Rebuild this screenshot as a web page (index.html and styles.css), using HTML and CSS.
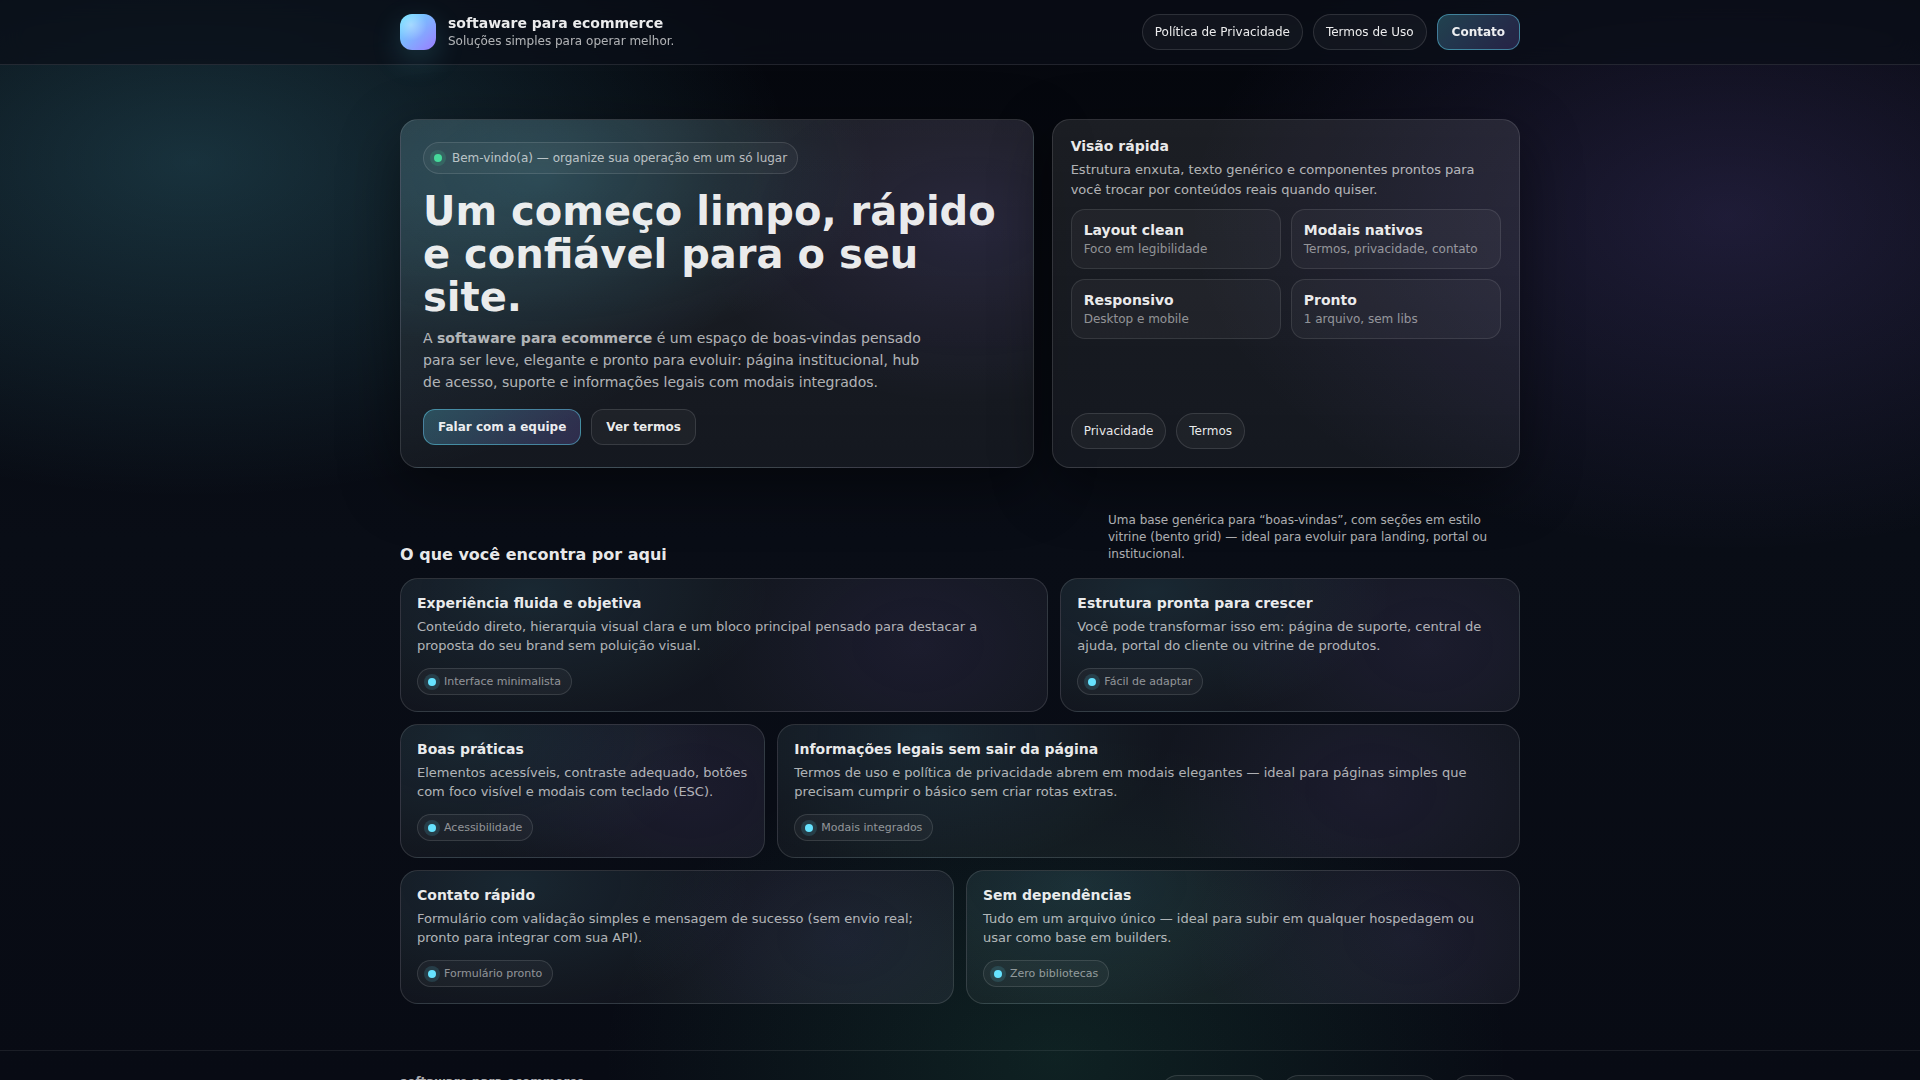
FILE: index.html
```html
<!DOCTYPE html>
<html lang="pt-BR">
<head>
    <meta charset="UTF-8">
    <meta name="viewport" content="width=device-width, initial-scale=1.0">
    <title>softaware para ecommerce</title>
    <link rel="stylesheet" href="styles.css">
</head>
<body>
    <header class="topbar">
        <div class="container topbar-inner">
            <a class="brand" href="#">
                <span class="logo"></span>
                <span class="brand-text">
                    <strong>softaware para ecommerce</strong>
                    <span>Soluções simples para operar melhor.</span>
                </span>
            </a>
            <nav class="actions">
                <button type="button" class="pill">Política de Privacidade</button>
                <button type="button" class="pill">Termos de Uso</button>
                <button type="button" class="btn btn-primary">Contato</button>
            </nav>
        </div>
    </header>

    <main class="container">
        <section class="hero">
            <div class="panel hero-main">
                <div class="badge"><span class="dot dot-green"></span>Bem-vindo(a) — organize sua operação em um só lugar</div>
                <h1>Um começo limpo, rápido e confiável para o seu site.</h1>
                <p>A <strong>softaware para ecommerce</strong> é um espaço de boas-vindas pensado para ser leve, elegante e pronto para evoluir: página institucional, hub de acesso, suporte e informações legais com modais integrados.</p>
                <div class="actions">
                    <button type="button" class="btn btn-primary">Falar com a equipe</button>
                    <button type="button" class="btn">Ver termos</button>
                </div>
            </div>

            <aside class="panel hero-side">
                <div>
                    <h3>Visão rápida</h3>
                    <p>Estrutura enxuta, texto genérico e componentes prontos para você trocar por conteúdos reais quando quiser.</p>
                    <div class="tiles">
                        <div class="tile"><strong>Layout clean</strong><span>Foco em legibilidade</span></div>
                        <div class="tile"><strong>Modais nativos</strong><span>Termos, privacidade, contato</span></div>
                        <div class="tile"><strong>Responsivo</strong><span>Desktop e mobile</span></div>
                        <div class="tile"><strong>Pronto</strong><span>1 arquivo, sem libs</span></div>
                    </div>
                </div>
                <div class="actions">
                    <button type="button" class="pill">Privacidade</button>
                    <button type="button" class="pill">Termos</button>
                </div>
            </aside>
        </section>

        <section class="features">
            <div class="section-head">
                <h2>O que você encontra por aqui</h2>
                <p>Uma base genérica para “boas-vindas”, com seções em estilo vitrine (bento grid) — ideal para evoluir para landing, portal ou institucional.</p>
            </div>

            <div class="bento">
                <article class="card span-7">
                    <h3>Experiência fluida e objetiva</h3>
                    <p>Conteúdo direto, hierarquia visual clara e um bloco principal pensado para destacar a proposta do seu brand sem poluição visual.</p>
                    <span class="chip"><span class="dot"></span>Interface minimalista</span>
                </article>
                <article class="card span-5">
                    <h3>Estrutura pronta para crescer</h3>
                    <p>Você pode transformar isso em: página de suporte, central de ajuda, portal do cliente ou vitrine de produtos.</p>
                    <span class="chip"><span class="dot"></span>Fácil de adaptar</span>
                </article>
                <article class="card span-4">
                    <h3>Boas práticas</h3>
                    <p>Elementos acessíveis, contraste adequado, botões com foco visível e modais com teclado (ESC).</p>
                    <span class="chip"><span class="dot"></span>Acessibilidade</span>
                </article>
                <article class="card span-8">
                    <h3>Informações legais sem sair da página</h3>
                    <p>Termos de uso e política de privacidade abrem em modais elegantes — ideal para páginas simples que precisam cumprir o básico sem criar rotas extras.</p>
                    <span class="chip"><span class="dot"></span>Modais integrados</span>
                </article>
                <article class="card span-6">
                    <h3>Contato rápido</h3>
                    <p>Formulário com validação simples e mensagem de sucesso (sem envio real; pronto para integrar com sua API).</p>
                    <span class="chip"><span class="dot"></span>Formulário pronto</span>
                </article>
                <article class="card span-6">
                    <h3>Sem dependências</h3>
                    <p>Tudo em um arquivo único — ideal para subir em qualquer hospedagem ou usar como base em builders.</p>
                    <span class="chip"><span class="dot"></span>Zero bibliotecas</span>
                </article>
            </div>
        </section>
    </main>

    <footer class="footer">
        <div class="container footer-inner">
            <strong>softaware para ecommerce</strong>
            <nav class="footer-links">
                <button type="button" class="pill">Termos de Uso</button>
                <button type="button" class="pill">Política de Privacidade</button>
                <button type="button" class="pill">Contato</button>
            </nav>
        </div>
    </footer>
</body>
</html>
```
FILE: styles.css
```css
:root {
    --text: rgba(255, 255, 255, 0.92);
    --muted: rgba(255, 255, 255, 0.68);
    --dim: rgba(255, 255, 255, 0.52);
    --line: rgba(255, 255, 255, 0.12);
    --cyan: #66e3ff;
    --green: #46d99a;
}

* {
    box-sizing: border-box;
}

body {
    margin: 0;
    font-family: "DejaVu Sans", sans-serif;
    font-size: 14px;
    color: var(--text);
    background:
        radial-gradient(1000px 560px at 10% 15%, rgba(102, 227, 255, 0.19), transparent 60%),
        radial-gradient(900px 560px at 90% 20%, rgba(155, 124, 255, 0.16), transparent 60%),
        radial-gradient(760px 540px at 55% 98%, rgba(70, 217, 154, 0.11), transparent 60%),
        linear-gradient(180deg, #05070d, #090d16 50%, #080b14);
    background-attachment: fixed;
}

h1, h2, h3, p {
    margin: 0;
}

.container {
    max-width: 1160px;
    margin: 0 auto;
    padding: 0 20px;
}

/* Top bar */
.topbar {
    position: sticky;
    top: 0;
    z-index: 10;
    background: rgba(10, 14, 24, 0.72);
    border-bottom: 1px solid rgba(255, 255, 255, 0.10);
    backdrop-filter: blur(12px);
}

.topbar-inner {
    display: flex;
    align-items: center;
    justify-content: space-between;
    padding-top: 14px;
    padding-bottom: 14px;
}

.brand {
    display: flex;
    align-items: center;
    gap: 12px;
    color: inherit;
    text-decoration: none;
}

.logo {
    width: 36px;
    height: 36px;
    border-radius: 12px;
    background:
        radial-gradient(circle at 30% 30%, rgba(255, 255, 255, 0.35), transparent 45%),
        linear-gradient(135deg, #66e3ff, #9b7cff);
    box-shadow: 0 10px 30px rgba(102, 227, 255, 0.18);
}

.brand-text {
    display: flex;
    flex-direction: column;
    gap: 2px;
}

.brand-text span {
    font-size: 12px;
    line-height: 16px;
    color: var(--muted);
}

.actions {
    display: flex;
    gap: 10px;
}

.pill, .btn {
    height: 36px;
    font-family: inherit;
    font-size: 12px;
    color: var(--text);
    background: rgba(255, 255, 255, 0.04);
    border: 1px solid var(--line);
    cursor: pointer;
}

.pill {
    padding: 0 12px;
    border-radius: 18px;
}

.btn {
    padding: 0 14px;
    font-weight: bold;
    border-radius: 12px;
}

.btn-primary {
    border-color: rgba(102, 227, 255, 0.45);
    background: linear-gradient(135deg, rgba(102, 227, 255, 0.25), rgba(155, 124, 255, 0.20));
}

/* Hero */
.hero {
    display: grid;
    grid-template-columns: 23fr 17fr;
    gap: 18px;
    padding-top: 54px;
}

.panel {
    border: 1px solid var(--line);
    border-radius: 18px;
    box-shadow: 0 18px 60px rgba(0, 0, 0, 0.45);
}

.hero-main {
    padding: 22px;
    background:
        radial-gradient(560px 300px at 22% 15%, rgba(102, 227, 255, 0.17), transparent 60%),
        radial-gradient(460px 300px at 90% 30%, rgba(155, 124, 255, 0.11), transparent 60%),
        linear-gradient(180deg, rgba(255, 255, 255, 0.09), rgba(255, 255, 255, 0.05));
}

.badge {
    display: inline-flex;
    align-items: center;
    gap: 10px;
    padding: 8px 10px;
    font-size: 12px;
    color: var(--muted);
    background: rgba(255, 255, 255, 0.04);
    border: 1px solid var(--line);
    border-radius: 16px;
}

.dot {
    width: 8px;
    height: 8px;
    border-radius: 50%;
    background: var(--cyan);
    box-shadow: 0 0 0 4px rgba(102, 227, 255, 0.14);
}

.dot-green {
    background: var(--green);
    box-shadow: 0 0 0 4px rgba(70, 217, 154, 0.16);
}

.hero-main h1 {
    margin: 16px 0 8px;
    font-size: 40px;
    line-height: 43px;
}

.hero-main p {
    max-width: 510px;
    line-height: 22px;
    color: var(--muted);
}

.hero-main .actions {
    margin-top: 16px;
}

.hero-side {
    display: flex;
    flex-direction: column;
    justify-content: space-between;
    gap: 18px;
    padding: 18px;
    background: linear-gradient(180deg, rgba(255, 255, 255, 0.09), rgba(255, 255, 255, 0.05));
}

h3 {
    font-size: 14px;
    margin-bottom: 6px;
}

.hero-side p {
    font-size: 13px;
    line-height: 20px;
    color: var(--muted);
}

.tiles {
    display: grid;
    grid-template-columns: 1fr 1fr;
    gap: 10px;
    margin-top: 9px;
}

.tile {
    display: flex;
    flex-direction: column;
    gap: 4px;
    padding: 12px;
    background: rgba(255, 255, 255, 0.04);
    border: 1px solid rgba(255, 255, 255, 0.10);
    border-radius: 14px;
}

.tile span {
    font-size: 12px;
    color: var(--dim);
}

/* Features */
.features {
    padding: 44px 0 46px;
}

.section-head {
    display: flex;
    align-items: flex-end;
    justify-content: space-between;
    gap: 14px;
    margin-bottom: 15px;
}

.section-head h2 {
    font-size: 16px;
    line-height: 17px;
}

.section-head p {
    max-width: 412px;
    font-size: 12px;
    line-height: 17px;
    color: var(--muted);
}

.bento {
    display: grid;
    grid-template-columns: repeat(12, 1fr);
    gap: 12px;
}

.card {
    padding: 16px;
    border: 1px solid var(--line);
    border-radius: 18px;
    background:
        radial-gradient(400px 220px at 20% 10%, rgba(102, 227, 255, 0.09), transparent 60%),
        radial-gradient(360px 260px at 80% 50%, rgba(155, 124, 255, 0.07), transparent 60%),
        rgba(255, 255, 255, 0.04);
}

.card p {
    margin-bottom: 13px;
    font-size: 13px;
    line-height: 19px;
    color: var(--muted);
}

.span-4 { grid-column: span 4; }
.span-5 { grid-column: span 5; }
.span-6 { grid-column: span 6; }
.span-7 { grid-column: span 7; }
.span-8 { grid-column: span 8; }

.chip {
    display: inline-flex;
    align-items: center;
    gap: 8px;
    padding: 6px 10px;
    font-size: 11px;
    color: var(--dim);
    background: rgba(255, 255, 255, 0.04);
    border: 1px solid var(--line);
    border-radius: 14px;
}

/* Footer */
.footer {
    border-top: 1px solid rgba(255, 255, 255, 0.08);
}

.footer-inner {
    display: flex;
    align-items: flex-start;
    justify-content: space-between;
    padding-top: 24px;
    padding-bottom: 24px;
    font-size: 12px;
    color: var(--muted);
}

.footer-links {
    display: flex;
    gap: 12px;
}

.footer-links .pill {
    padding: 0 10px;
}

@media (max-width: 900px) {
    .hero {
        grid-template-columns: 1fr;
    }

    .card {
        grid-column: 1 / -1;
    }
}
```
